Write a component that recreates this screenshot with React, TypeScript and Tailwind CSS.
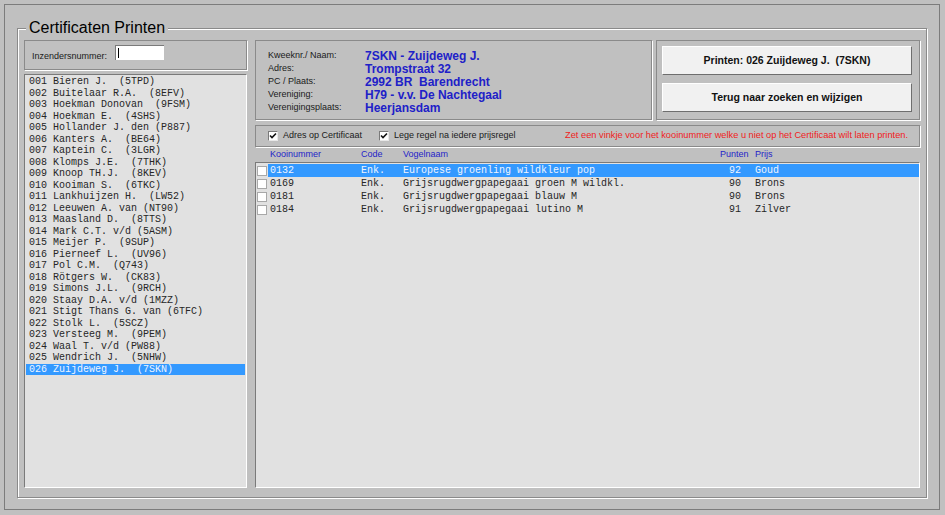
import React from 'react';

const deelnemers = [
    '001 Bieren J.  (5TPD)',
    '002 Buitelaar R.A.  (8EFV)',
    '003 Hoekman Donovan  (9FSM)',
    '004 Hoekman E.  (4SHS)',
    '005 Hollander J. den (P887)',
    '006 Kanters A.  (BE64)',
    '007 Kaptein C.  (3LGR)',
    '008 Klomps J.E.  (7THK)',
    '009 Knoop TH.J.  (8KEV)',
    '010 Kooiman S.  (6TKC)',
    '011 Lankhuijzen H.  (LW52)',
    '012 Leeuwen A. van (NT90)',
    '013 Maasland D.  (8TTS)',
    '014 Mark C.T. v/d (5ASM)',
    '015 Meijer P.  (9SUP)',
    '016 Pierneef L.  (UV96)',
    '017 Pol C.M.  (Q743)',
    '018 Rötgers W.  (CK83)',
    '019 Simons J.L.  (9RCH)',
    '020 Staay D.A. v/d (1MZZ)',
    '021 Stigt Thans G. van (6TFC)',
    '022 Stolk L.  (5SCZ)',
    '023 Versteeg M.  (9PEM)',
    '024 Waal T. v/d (PW88)',
    '025 Wendrich J.  (5NHW)',
    '026 Zuijdeweg J.  (7SKN)',
];

const vogels = [
    { kooi: '0132', code: 'Enk.', naam: 'Europese groenling wildkleur pop', punten: 92, prijs: 'Goud' },
    { kooi: '0169', code: 'Enk.', naam: 'Grijsrugdwergpapegaai groen M wildkl.', punten: 90, prijs: 'Brons' },
    { kooi: '0181', code: 'Enk.', naam: 'Grijsrugdwergpapegaai blauw M', punten: 90, prijs: 'Brons' },
    { kooi: '0184', code: 'Enk.', naam: 'Grijsrugdwergpapegaai lutino M', punten: 91, prijs: 'Zilver' },
];

const info = [
    ['Kweeknr./ Naam:', '7SKN - Zuijdeweg J.'],
    ['Adres:', 'Trompstraat 32'],
    ['PC / Plaats:', '2992 BR  Barendrecht'],
    ['Vereniging:', 'H79 - v.v. De Nachtegaal'],
    ['Verenigingsplaats:', 'Heerjansdam'],
];

// klassiek windows vinkje
function Vinkje() {
    return (
        <span className="w-[10px] h-[10px] bg-white border-t border-l border-[#7a7a7a] border-b border-r border-b-[#e8e8e8] border-r-[#e8e8e8] flex items-center justify-center shrink-0">
            <svg width="8" height="8" viewBox="0 0 8 8">
                <path d="M1 3.5 L3 5.5 L7 1.5" fill="none" stroke="#111" strokeWidth="1.6" />
            </svg>
        </span>
    );
}

export default function App() {
    const selected = 25;

    return (
        <div className="w-[945px] h-[515px] bg-[#c0c0c0] p-[4px] font-['Liberation_Sans',Arial,sans-serif] text-[#1a1a1a]">
            <div className="w-[936px] h-[506px] border border-[#7c7c7c] pl-[12px] pt-[14px]">
                <fieldset className="w-[910px] h-[479px] border border-[#8a8a8a] shadow-[1px_1px_0_#fff,inset_1px_1px_0_#fff] pl-[6px] pt-[3px]">
                    <legend className="ml-[2px] px-[3px] text-[16px] leading-[18px] text-black bg-[#c0c0c0]">
                        Certificaten Printen
                    </legend>

                    <div className="flex gap-[8px]">
                        {/* LINKS: zoeken + lijst */}
                        <div className="w-[223px] flex flex-col gap-[4px]">
                            <div className="h-[30px] border border-[#8a8a8a] shadow-[1px_1px_0_#fff] flex items-center pl-[7px] pt-[3px]">
                                <span className="text-[9px] w-[83px]">Inzendersnummer:</span>
                                <div className="w-[49px] h-[15px] bg-white border-t border-l border-[#7a7a7a] mt-[-8px] flex items-center pl-[2px]">
                                    <span className="w-[1px] h-[10px] bg-black" />
                                </div>
                            </div>

                            <div className="h-[414px] bg-[#e1e1e1] border-t border-l border-[#7a7a7a] border-b border-r border-b-white border-r-white pt-[1px] font-['Liberation_Mono','Courier_New',monospace] text-[10px] text-[#262626]">
                                {deelnemers.map((d, i) => (
                                    <div
                                        key={d}
                                        className={`h-[11.5px] leading-[11.5px] mx-[1px] pl-[3px] whitespace-pre ${i === selected ? 'bg-[#3399ff] text-[#eef4ff]' : ''}`}
                                    >
                                        {d}
                                    </div>
                                ))}
                            </div>
                        </div>

                        {/* RECHTS */}
                        <div className="w-[665px] flex flex-col">
                            <div className="flex gap-[4px] h-[80px]">
                                <div className="w-[397px] border border-[#8a8a8a] shadow-[1px_1px_0_#fff] pl-[12px] pt-[8px]">
                                    {info.map(([label, waarde]) => (
                                        <div key={label} className="flex items-center h-[13px]">
                                            <span className="w-[97px] text-[9px]">{label}</span>
                                            <span className="text-[12px] font-bold text-[#2020c8] whitespace-pre">{waarde}</span>
                                        </div>
                                    ))}
                                </div>
                                <div className="w-[264px] border border-[#8a8a8a] shadow-[1px_1px_0_#fff] pl-[5px] pt-[5px] flex flex-col gap-[8px]">
                                    <button className="w-[250px] h-[29px] bg-[#f1f1f1] border border-t-white border-l-white border-b-[#6e6e6e] border-r-[#6e6e6e] text-[10.5px] font-bold text-[#111] whitespace-pre">
                                        {'Printen: 026 Zuijdeweg J.  (7SKN)'}
                                    </button>
                                    <button className="w-[250px] h-[29px] bg-[#f1f1f1] border border-t-white border-l-white border-b-[#6e6e6e] border-r-[#6e6e6e] text-[10.5px] font-bold text-[#111]">
                                        Terug naar zoeken en wijzigen
                                    </button>
                                </div>
                            </div>

                            <div className="mt-[5px] h-[22px] border border-[#8a8a8a] shadow-[1px_1px_0_#fff] flex items-center pl-[12px] text-[9px]">
                                <Vinkje />
                                <span className="ml-[5px] w-[96px]">Adres op Certificaat</span>
                                <Vinkje />
                                <span className="ml-[5px]">Lege regel na iedere prijsregel</span>
                                <span className="ml-auto mr-[11px] text-[9.25px] text-[#f01c1c]">
                                    Zet een vinkje voor het kooinummer welke u niet op het Certificaat wilt laten printen.
                                </span>
                            </div>

                            <div className="h-[15px] flex items-center text-[9px] text-[#2424c8]">
                                <span className="w-[15px]" />
                                <span className="w-[91px]">Kooinummer</span>
                                <span className="w-[42px]">Code</span>
                                <span className="w-[317px]">Vogelnaam</span>
                                <span className="w-[35px]">Punten</span>
                                <span>Prijs</span>
                            </div>

                            <div className="h-[326px] bg-[#e1e1e1] border-t border-l border-[#7a7a7a] border-b border-r border-b-white border-r-white pt-[1px] font-['Liberation_Mono','Courier_New',monospace] text-[10px] text-[#262626]">
                                {vogels.map((v, i) => (
                                    <div key={v.kooi} className="flex h-[13px] items-center">
                                        <span className="w-[12px] flex justify-center">
                                            <span className="w-[10px] h-[10px] bg-white border border-[#a8a8a8]" />
                                        </span>
                                        <div className={`flex-1 h-[13px] leading-[13px] flex ${i === 0 ? 'bg-[#3399ff] text-[#eef4ff]' : ''}`}>
                                            <span className="w-[93px] pl-[2px]">{v.kooi}</span>
                                            <span className="w-[42px]">{v.code}</span>
                                            <span className="w-[310px] whitespace-pre">{v.naam}</span>
                                            <span className="w-[28px] text-right">{v.punten}</span>
                                            <span className="pl-[14px]">{v.prijs}</span>
                                        </div>
                                    </div>
                                ))}
                            </div>
                        </div>
                    </div>
                </fieldset>
            </div>
        </div>
    );
}
